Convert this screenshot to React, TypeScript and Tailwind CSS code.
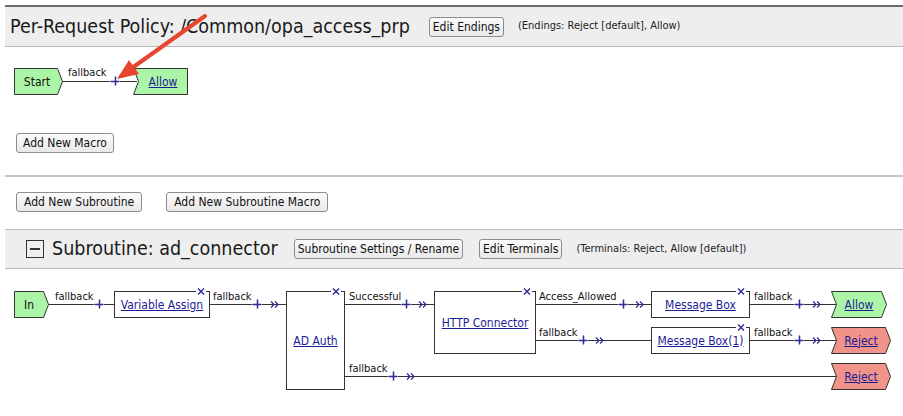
import React from "react";

const LINE = "#333333";
const BLUE = "#2b2b9a";
const GREEN = "#acf5a6";
const RED = "#f0948a";

type Seg = { y: number; from: number; plus: number; chev?: number; to: number };

function Plus({ x, y }: { x: number; y: number }) {
  return <path d={`M${x - 4.5} ${y + 0.5}H${x + 4.5}M${x + 0.5} ${y - 4.5}V${y + 4.5}`} stroke={BLUE} strokeWidth={1.5} fill="none" />;
}
function Chev({ x, y }: { x: number; y: number }) {
  return (
    <path
      d={`M${x - 4} ${y - 2.5}L${x - 1} ${y + 0.5}L${x - 4} ${y + 3.5}M${x} ${y - 2.5}L${x + 3} ${y + 0.5}L${x} ${y + 3.5}`}
      stroke={BLUE}
      strokeWidth={1.2}
      fill="none"
    />
  );
}
function Close({ x, y }: { x: number; y: number }) {
  return (
    <g>
      <rect x={x - 5} y={y - 4} width={10} height={8} fill="white" />
      <path d={`M${x - 3} ${y - 3}L${x + 3} ${y + 3}M${x + 3} ${y - 3}L${x - 3} ${y + 3}`} stroke={BLUE} strokeWidth={1.4} fill="none" />
    </g>
  );
}
function Connector({ s }: { s: Seg }) {
  const y = s.y + 0.5;
  return (
    <g>
      <path d={`M${s.from} ${y}H${s.plus - 5}M${s.plus + 5} ${y}H${s.to}`} stroke={LINE} strokeWidth={1} fill="none" />
      <Plus x={s.plus} y={s.y} />
      {s.chev !== undefined && <Chev x={s.chev} y={s.y} />}
    </g>
  );
}

type Term = { x: number; y: number; w: number; h: number; notch: boolean; point: boolean; fill: string };
function Terminal({ t }: { t: Term }) {
  const x0 = t.x + 0.5;
  const y0 = t.y + 0.5;
  const x1 = t.x + t.w - 0.5;
  const y1 = t.y + t.h - 0.5;
  const my = t.y + t.h / 2;
  const pts: string[] = [];
  pts.push(`${x0},${y0}`);
  if (t.point) {
    pts.push(`${x1 - 5},${y0}`, `${x1},${my}`, `${x1 - 5},${y1}`);
  } else {
    pts.push(`${x1},${y0}`, `${x1},${y1}`);
  }
  pts.push(`${x0},${y1}`);
  if (t.notch) pts.push(`${x0 + 5},${my}`);
  return <polygon points={pts.join(" ")} fill={t.fill} stroke={LINE} strokeWidth={1} />;
}

function Box({ x, y, w, h }: { x: number; y: number; w: number; h: number }) {
  return (
    <g>
      <rect x={x + 0.5} y={y + 0.5} width={w - 1} height={h - 1} fill="white" stroke={LINE} strokeWidth={1} />
      <Close x={x + w - 9} y={y + 0.5} />
    </g>
  );
}

function Label({ x, y, text }: { x: number; y: number; text: string }) {
  return (
    <div className="absolute text-[11px] leading-[13px] text-[#111] whitespace-nowrap" style={{ left: x, top: y - 14 }}>
      {text}
    </div>
  );
}

function NodeText({ x, y, w, h, text, link }: { x: number; y: number; w: number; h: number; text: string; link?: boolean }) {
  return (
    <div className="absolute flex items-center justify-center text-[12px] leading-[14px] whitespace-nowrap" style={{ left: x, top: y, width: w, height: h }}>
      {link ? <a className="text-[#1c1c96] underline cursor-pointer">{text}</a> : <span className="text-[#111]">{text}</span>}
    </div>
  );
}

function Btn({ children, className = "" }: { children: React.ReactNode; className?: string }) {
  return (
    <button className={`h-[20px] text-[12px] leading-[18px] text-[#111] border border-[#8c8c8c] rounded-[3px] bg-gradient-to-b from-[#fbfbfb] to-[#e9e9e9] whitespace-nowrap ${className}`}>
      {children}
    </button>
  );
}

export default function App() {
  const flow2Segs: Seg[] = [
    { y: 35, from: 48, plus: 99, to: 114 },
    { y: 35, from: 209, plus: 257, chev: 275, to: 286 },
    { y: 35, from: 344, plus: 406, chev: 423, to: 434 },
    { y: 35, from: 535, plus: 623, chev: 640, to: 651 },
    { y: 35, from: 749, plus: 799, chev: 817, to: 836 },
    { y: 71, from: 535, plus: 583, chev: 600, to: 651 },
    { y: 71, from: 749, plus: 799, chev: 817, to: 836 },
    { y: 107, from: 344, plus: 393, chev: 411, to: 836 },
  ];
  return (
    <div className="relative flex flex-col w-[903px] h-[416px] overflow-hidden bg-white pt-[5px] [font-family:'DejaVu_Sans_Condensed','DejaVu_Sans',sans-serif]">
      {/* Policy header */}
      <div className="ml-[5px] h-[42px] shrink-0 box-border border-t-2 border-t-[#6a6a6a] border-b border-b-[#b8b8b8] bg-[#eeeeee] flex items-center pl-[5px]">
        <span className="text-[19.5px] leading-[24px] text-[#1a1a1a] whitespace-nowrap">Per-Request Policy: /Common/opa_access_prp</span>
        <Btn className="ml-[19px] px-[3px]">Edit Endings</Btn>
        <span className="ml-[14px] text-[11px] text-[#222] whitespace-nowrap">(Endings: Reject [default], Allow)</span>
      </div>

      {/* Main flow */}
      <div className="relative h-[86px] shrink-0">
        <svg className="absolute inset-0" width={903} height={86}>
          <path d="M62 34.5H110M120 34.5H137" stroke={LINE} strokeWidth={1} fill="none" />
          <Plus x={115} y={34} />
          <Terminal t={{ x: 14, y: 21, w: 49, h: 27, notch: false, point: true, fill: GREEN }} />
          <Terminal t={{ x: 133, y: 21, w: 55, h: 27, notch: true, point: false, fill: GREEN }} />
        </svg>
        <Label x={68} y={33} text="fallback" />
        <NodeText x={14} y={21} w={46} h={27} text="Start" />
        <NodeText x={138} y={21} w={50} h={27} text="Allow" link />
      </div>

      <div className="flex pl-[16px]">
        <Btn className="px-[6px]">Add New Macro</Btn>
      </div>
      <div className="ml-[5px] mt-[22px] h-[2px] shrink-0 bg-[#c6c6c6]" />
      <div className="pl-[16px] mt-[15px] flex gap-[24px]">
        <Btn className="px-[7px]">Add New Subroutine</Btn>
        <Btn className="px-[7px]">Add New Subroutine Macro</Btn>
      </div>

      {/* Subroutine header */}
      <div className="ml-[5px] mt-[17px] h-[40px] shrink-0 box-border border-t border-t-[#b8b8b8] border-b border-b-[#b8b8b8] bg-[#eeeeee] flex items-center pl-[21px]">
        <div className="w-[18px] h-[18px] border border-[#333] flex items-center justify-center">
          <div className="w-[10px] h-[1.5px] bg-[#333]" />
        </div>
        <span className="ml-[8px] text-[19.5px] leading-[24px] text-[#1a1a1a] whitespace-nowrap">Subroutine: ad_connector</span>
        <Btn className="ml-[16px] px-[3px]">Subroutine Settings / Rename</Btn>
        <Btn className="ml-[16px] px-[3px]">Edit Terminals</Btn>
        <span className="ml-[14px] text-[11px] text-[#222] whitespace-nowrap">(Terminals: Reject, Allow [default])</span>
      </div>

      {/* Subroutine flow */}
      <div className="relative h-[147px] shrink-0">
        <svg className="absolute inset-0" width={903} height={147}>
          {flow2Segs.map((s, i) => (
            <Connector key={i} s={s} />
          ))}
          <Terminal t={{ x: 14, y: 22, w: 35, h: 27, notch: false, point: true, fill: GREEN }} />
          <Box x={114} y={22} w={96} h={27} />
          <Box x={286} y={22} w={59} h={99} />
          <Box x={434} y={22} w={102} h={63} />
          <Box x={651} y={22} w={99} h={27} />
          <Box x={651} y={58} w={99} h={27} />
          <Terminal t={{ x: 831, y: 22, w: 56, h: 27, notch: true, point: true, fill: GREEN }} />
          <Terminal t={{ x: 831, y: 58, w: 60, h: 27, notch: true, point: true, fill: RED }} />
          <Terminal t={{ x: 831, y: 94, w: 60, h: 27, notch: true, point: true, fill: RED }} />
        </svg>
        <Label x={55} y={35} text="fallback" />
        <Label x={213} y={35} text="fallback" />
        <Label x={349} y={35} text="Successful" />
        <Label x={539} y={35} text="Access_Allowed" />
        <Label x={754} y={35} text="fallback" />
        <Label x={539} y={71} text="fallback" />
        <Label x={754} y={71} text="fallback" />
        <Label x={349} y={107} text="fallback" />
        <NodeText x={14} y={22} w={30} h={27} text="In" />
        <NodeText x={114} y={22} w={96} h={27} text="Variable Assign" link />
        <NodeText x={286} y={22} w={59} h={99} text="AD Auth" link />
        <NodeText x={434} y={22} w={102} h={63} text="HTTP Connector" link />
        <NodeText x={651} y={22} w={99} h={27} text="Message Box" link />
        <NodeText x={651} y={58} w={99} h={27} text="Message Box(1)" link />
        <NodeText x={836} y={22} w={46} h={27} text="Allow" link />
        <NodeText x={836} y={58} w={50} h={27} text="Reject" link />
        <NodeText x={836} y={94} w={50} h={27} text="Reject" link />
      </div>

      {/* Red annotation arrow */}
      <svg className="absolute left-0 top-0 pointer-events-none" width={230} height={100}>
        <line x1={205} y1={16} x2={132} y2={68} stroke="#e8452f" strokeWidth={4} strokeLinecap="round" />
        <polygon points="117,79 139,74 129,60" fill="#e8452f" />
      </svg>
    </div>
  );
}
